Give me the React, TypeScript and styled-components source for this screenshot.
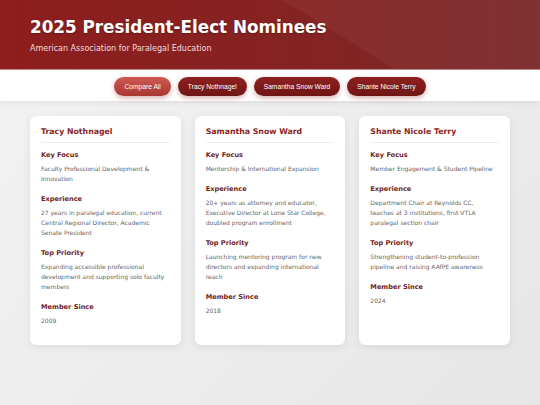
import React from 'react';
import styled, { createGlobalStyle } from 'styled-components';

const GlobalStyle = createGlobalStyle`
  html, body {
    margin: 0;
    padding: 0;
  }
  body {
    font-family: "DejaVu Sans", Verdana, sans-serif;
    background: linear-gradient(135deg, #f3f3f3 0%, #ececec 60%, #e6e6e6 100%);
    min-height: 405px;
  }
  * {
    box-sizing: border-box;
  }
`;

const Page = styled.main`
  min-height: 405px;
  display: flex;
  flex-direction: column;
`;

const Header = styled.header`
  position: relative;
  overflow: hidden;
  padding: 17px 30px 16px;
  background: linear-gradient(90deg, #8e1d1d 0%, #852323 55%, #7b2828 100%);
  border-bottom: 1px solid #c48a8a;

  &::before {
    content: '';
    position: absolute;
    inset: 0;
    background: rgba(255, 255, 255, 0.045);
    clip-path: polygon(52% 0, 100% 0, 100% 100%, 73% 100%, 57% 22%);
  }
`;

const Title = styled.h1`
  position: relative;
  margin: 0 0 7px;
  font-size: 16.8px;
  font-weight: bold;
  color: #fff;
  text-shadow: 0 1px 2px rgba(0, 0, 0, 0.25);
`;

const Subtitle = styled.p`
  position: relative;
  margin: 0;
  font-size: 8px;
  color: #f3dede;
`;

const Nav = styled.nav`
  display: flex;
  justify-content: center;
  gap: 7px;
  padding: 7px 0 5px;
  background: #fff;
  box-shadow: 0 2px 6px rgba(0, 0, 0, 0.07);
`;

const NavButton = styled.button<{ $active?: boolean }>`
  height: 19px;
  padding: 0 10px;
  border: none;
  border-radius: 10px;
  font-family: "Liberation Sans", Arial, sans-serif;
  font-size: 6.7px;
  color: #fff;
  background: ${(p) =>
    p.$active
      ? 'linear-gradient(180deg, #cf5a55 0%, #aa3631 100%)'
      : 'linear-gradient(180deg, #8f2020 0%, #6f1616 100%)'};
  box-shadow: 0 2px 5px rgba(139, 26, 26, 0.35);
`;

const Cards = styled.section`
  display: grid;
  grid-template-columns: repeat(3, 1fr);
  gap: 14px;
  padding: 15px 30px 0;
`;

const Card = styled.article`
  background: #fff;
  border-radius: 6px;
  padding: 11px 11px 19px;
  box-shadow: 0 2px 8px rgba(0, 0, 0, 0.08);
`;

const Name = styled.h2`
  margin: 0 0 8px;
  padding-bottom: 6px;
  border-bottom: 1px solid #eeeeee;
  font-size: 7.8px;
  font-weight: bold;
  color: #8b2424;
`;

const Section = styled.div`
  margin-bottom: 11px;

  &:last-child {
    margin-bottom: 0;
  }
`;

const Label = styled.h3`
  margin: 0 0 5px;
  font-size: 6.6px;
  font-weight: bold;
  color: #6e1e1e;
`;

const Text = styled.p`
  margin: 0;
  font-size: 6px;
  line-height: 10px;
  color: #666;
`;

const nominees = [
  {
    name: 'Tracy Nothnagel',
    focus: 'Faculty Professional Development & Innovation',
    experience:
      '27 years in paralegal education, current Central Regional Director, Academic Senate President',
    priority:
      'Expanding accessible professional development and supporting solo faculty members',
    since: '2009',
  },
  {
    name: 'Samantha Snow Ward',
    focus: 'Mentorship & International Expansion',
    experience:
      '20+ years as attorney and educator, Executive Director at Lone Star College, doubled program enrollment',
    priority:
      'Launching mentoring program for new directors and expanding international reach',
    since: '2018',
  },
  {
    name: 'Shante Nicole Terry',
    focus: 'Member Engagement & Student Pipeline',
    experience:
      'Department Chair at Reynolds CC, teaches at 3 institutions, first VTLA paralegal section chair',
    priority:
      'Strengthening student-to-profession pipeline and raising AAfPE awareness',
    since: '2024',
  },
];

const App = () => {
  return (
    <>
      <GlobalStyle />
      <Page>
        <Header>
          <Title>2025 President-Elect Nominees</Title>
          <Subtitle>American Association for Paralegal Education</Subtitle>
        </Header>
        <Nav>
          <NavButton $active>Compare All</NavButton>
          {nominees.map((n) => (
            <NavButton key={n.name}>{n.name}</NavButton>
          ))}
        </Nav>
        <Cards>
          {nominees.map((n) => (
            <Card key={n.name}>
              <Name>{n.name}</Name>
              <Section>
                <Label>Key Focus</Label>
                <Text>{n.focus}</Text>
              </Section>
              <Section>
                <Label>Experience</Label>
                <Text>{n.experience}</Text>
              </Section>
              <Section>
                <Label>Top Priority</Label>
                <Text>{n.priority}</Text>
              </Section>
              <Section>
                <Label>Member Since</Label>
                <Text>{n.since}</Text>
              </Section>
            </Card>
          ))}
        </Cards>
      </Page>
    </>
  );
};

App.displayName = 'App';
export default App;
